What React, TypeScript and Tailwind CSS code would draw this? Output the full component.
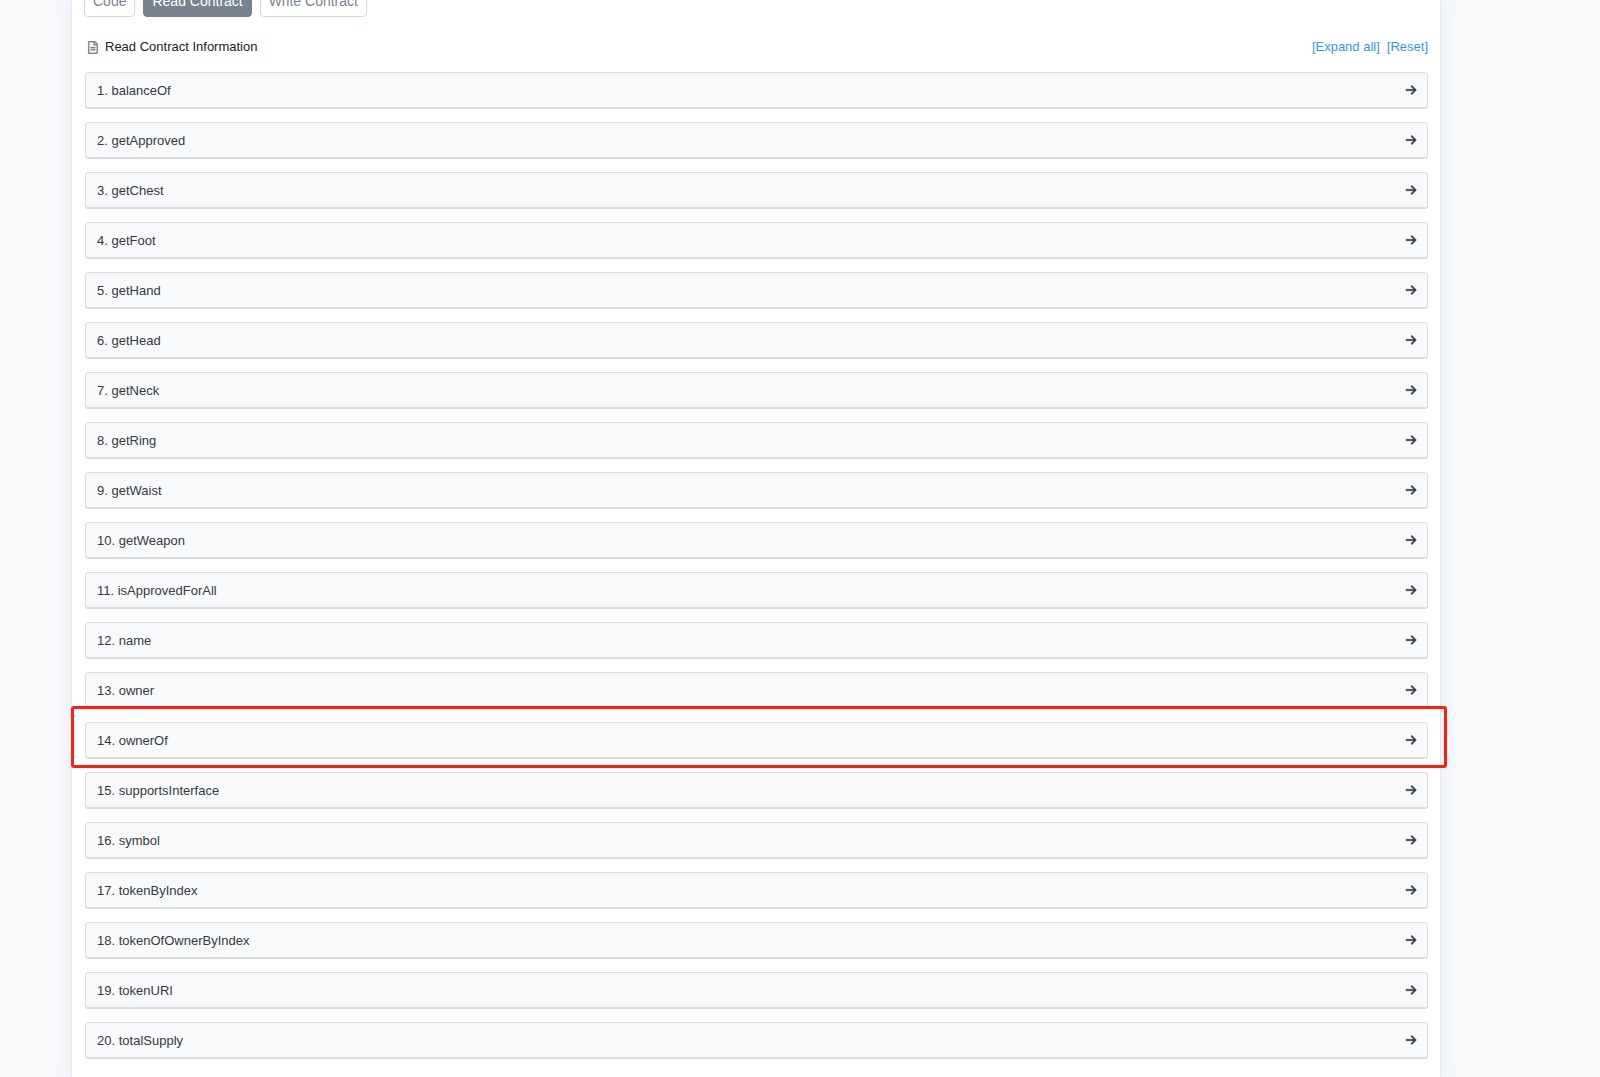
import React from "react";
import { FaRegFileAlt } from "react-icons/fa";
import { FaArrowRight } from "react-icons/fa6";

const methods = [
  "balanceOf",
  "getApproved",
  "getChest",
  "getFoot",
  "getHand",
  "getHead",
  "getNeck",
  "getRing",
  "getWaist",
  "getWeapon",
  "isApprovedForAll",
  "name",
  "owner",
  "ownerOf",
  "supportsInterface",
  "symbol",
  "tokenByIndex",
  "tokenOfOwnerByIndex",
  "tokenURI",
  "totalSupply",
];

const HIGHLIGHTED = "ownerOf";

interface TabProps {
  label: string;
  active?: boolean;
}

const Tab = ({ label, active }: TabProps) => (
  <button
    type="button"
    className={
      active
        ? "h-8 rounded border border-[#77838f] bg-[#77838f] px-2 text-sm text-white"
        : "h-8 rounded border border-[#d5dae2] bg-white px-2 text-sm text-[#77838f]"
    }
  >
    {label}
  </button>
);

interface MethodRowProps {
  index: number;
  name: string;
}

const MethodRow = ({ index, name }: MethodRowProps) => (
  <li className="relative">
    <button
      type="button"
      className="flex h-9 w-full items-center justify-between rounded-[3px] border border-[#dbdddf] bg-[#f8f9fb] pr-[10px] pl-[11px] text-left text-[#343a40] shadow-[0_1px_0_#d9dbdd]"
    >
      <span className="pt-0.5">
        {index}. {name}
      </span>
      <FaArrowRight className="size-3 stroke-current stroke-[16]" />
    </button>
    {name === HIGHLIGHTED && (
      <div className="pointer-events-none absolute -top-4 -right-[19px] -bottom-[10px] -left-[14px] z-10 rounded-[3px] border-3 border-[#ff1c10]" />
    )}
  </li>
);

const App = () => {
  return (
    <div className="min-h-screen overflow-hidden bg-[#f8f9fb] pr-[159px] pl-[71px] font-['Liberation_Sans',Arial,sans-serif] text-[13px] leading-5">
      <main className="border-x border-[#e7eaf3] bg-white px-3 pb-5 shadow-[0_8px_19px_rgba(189,197,209,0.2)]">
        {/* Tabs, scrolled partly out of view */}
        <nav className="-mt-[15px] flex gap-2">
          <Tab label="Code" />
          <Tab label="Read Contract" active />
          <Tab label="Write Contract" />
        </nav>

        {/* Section header */}
        <div className="mt-5 mb-[15px] flex items-center justify-between pl-[3px]">
          <h1 className="flex items-center gap-[6px] text-[#1e2022]">
            <FaRegFileAlt className="h-[13px] w-3 stroke-current stroke-[8] text-[#77838f]" />
            Read Contract Information
          </h1>
          <div className="flex gap-[7px] text-[#3498db]">
            <a href="#expand">[Expand all]</a>
            <a href="#reset">[Reset]</a>
          </div>
        </div>

        <ol className="flex flex-col gap-[14px] pl-px">
          {methods.map((name, i) => (
            <MethodRow key={name} index={i + 1} name={name} />
          ))}
        </ol>
      </main>
    </div>
  );
};

export default App;
